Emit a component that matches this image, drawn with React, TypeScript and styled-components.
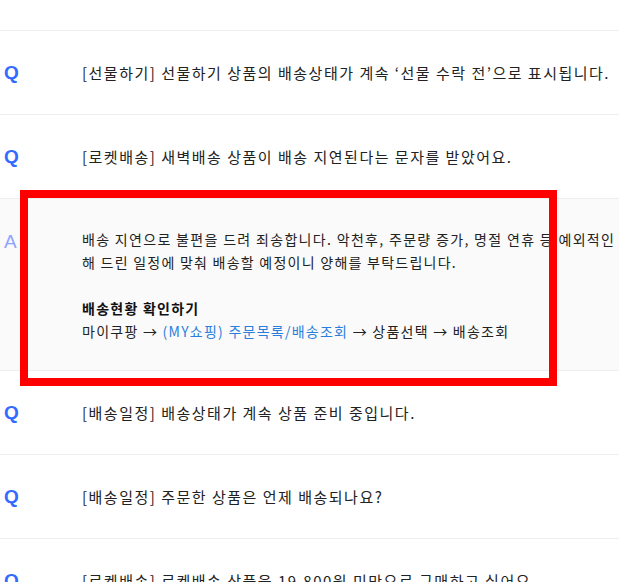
import React from 'react';
import styled, { createGlobalStyle } from 'styled-components';

const color = {
  blue: '#346aff',
  lightBlue: '#8ea3ff',
  link: '#2b7fdc',
  text: '#222222',
  line: '#eeeeee',
  answerBg: '#fafafa',
};

const GlobalStyle = createGlobalStyle`
  html, body {
    margin: 0;
    padding: 0;
    background: #ffffff;
    overflow: hidden;
  }
  body {
    font-family: "Noto Sans CJK KR", "Noto Sans", sans-serif;
    color: ${color.text};
  }
`;

const Root = styled.div`
  position: relative;
  width: 619px;
  height: 582px;
  overflow: hidden;
`;

const TopSpacer = styled.div`
  height: 30px;
  border-bottom: 1px solid ${color.line};
`;

const QuestionRow = styled.div`
  display: flex;
  align-items: center;
  height: 83px;
  padding-left: 4px;
  border-bottom: 1px solid ${color.line};
`;

type MarkProps = {
  answer?: boolean;
};

const Mark = styled.span<MarkProps>`
  flex: 0 0 78px;
  font-family: "Liberation Sans", Arial, sans-serif;
  font-size: 19px;
  font-weight: ${(props) => (props.answer ? 400 : 700)};
  color: ${(props) => (props.answer ? color.lightBlue : color.blue)};
`;

const QuestionText = styled.span`
  font-size: 15px;
  letter-spacing: 1.5px;
  white-space: nowrap;
`;

const AnswerRow = styled.div`
  display: flex;
  align-items: flex-start;
  padding: 29px 0 27px 4px;
  background-color: ${color.answerBg};
  border-bottom: 1px solid ${color.line};
`;

const AnswerMark = styled(Mark)`
  line-height: 23px;
  padding-top: 2px;
`;

const AnswerBody = styled.div`
  font-size: 14px;
  line-height: 23px;
  letter-spacing: 1.25px;
  white-space: nowrap;
`;

const FirstLine = styled.div`
  letter-spacing: 1.32px;
`;

const Blank = styled.div`
  height: 23px;
`;

const Strong = styled.div`
  font-weight: 700;
  color: #111111;
`;

const Link = styled.span`
  color: ${color.link};
`;

const Highlight = styled.div`
  position: absolute;
  left: 20px;
  top: 190px;
  width: 537px;
  height: 196px;
  box-sizing: border-box;
  border: 8px solid #ff0000;
  pointer-events: none;
`;

const before = [
  '[선물하기] 선물하기 상품의 배송상태가 계속 ‘선물 수락 전’으로 표시됩니다.',
  '[로켓배송] 새벽배송 상품이 배송 지연된다는 문자를 받았어요.',
];

const after = [
  '[배송일정] 배송상태가 계속 상품 준비 중입니다.',
  '[배송일정] 주문한 상품은 언제 배송되나요?',
  '[로켓배송] 로켓배송 상품을 19,800원 미만으로 구매하고 싶어요.',
];

const App: React.FC = () => {
  return (
    <Root>
      <GlobalStyle />
      <TopSpacer />
      {before.map((q) => (
        <QuestionRow key={q}>
          <Mark>Q</Mark>
          <QuestionText>{q}</QuestionText>
        </QuestionRow>
      ))}
      <AnswerRow>
        <AnswerMark answer>A</AnswerMark>
        <AnswerBody>
          <FirstLine>
            배송 지연으로 불편을 드려 죄송합니다. 악천후, 주문량 증가, 명절 연휴 등 예외적인 상황으로 배송이 지연되고 있습니다. 안내
          </FirstLine>
          <div>해 드린 일정에 맞춰 배송할 예정이니 양해를 부탁드립니다.</div>
          <Blank />
          <Strong>배송현황 확인하기</Strong>
          <div>
            마이쿠팡 → <Link>(MY쇼핑) 주문목록/배송조회</Link> → 상품선택 → 배송조회
          </div>
        </AnswerBody>
      </AnswerRow>
      {after.map((q) => (
        <QuestionRow key={q}>
          <Mark>Q</Mark>
          <QuestionText>{q}</QuestionText>
        </QuestionRow>
      ))}
      <Highlight />
    </Root>
  );
};

export default App;
